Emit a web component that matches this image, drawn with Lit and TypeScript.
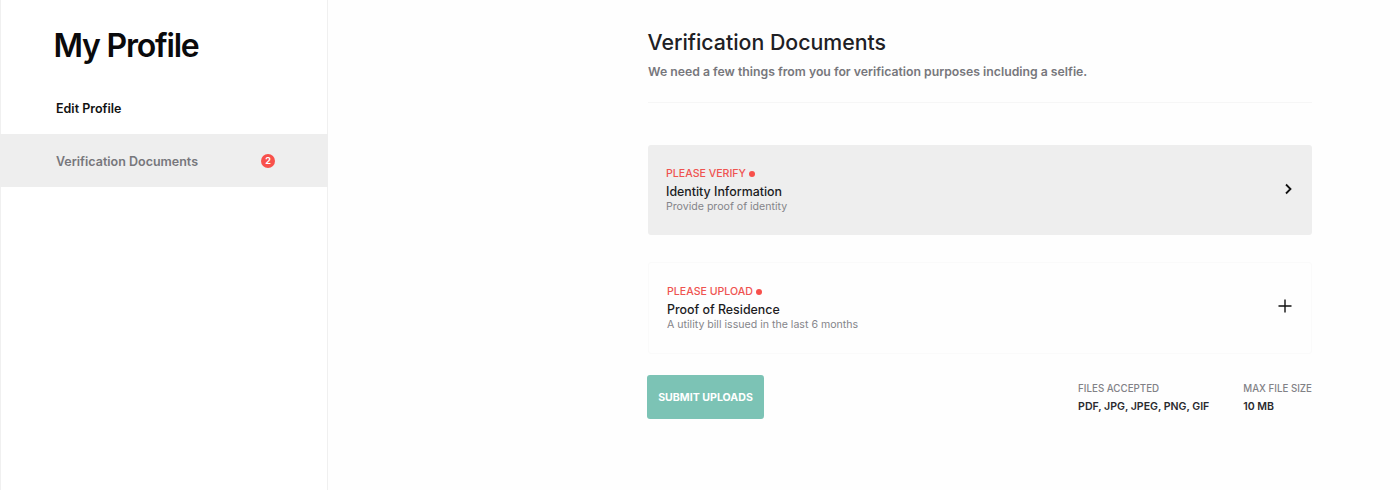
import { LitElement, html, css } from "lit";
import { customElement } from "lit/decorators.js";

@customElement("app-root")
export class AppRoot extends LitElement {
  static styles = css`
    :host { display: flex; width: 1400px; height: 490px; overflow: hidden; background: #fefefe; font-family: Inter, "Liberation Sans", sans-serif; color: #1c1c1e; }
    * { box-sizing: border-box; }
    .side { width: 328px; flex: none; border-left: 1px solid #f0f0f0; border-right: 1px solid #f0f0f0; padding-top: 26px; background: #fff; }
    h1 { margin: 0 0 0 52.5px; font-size: 32px; line-height: 40px; font-weight: 600; letter-spacing: -1.2px; color: #0a0a0c; }
    .nav { display: block; height: 53px; margin-top: 15px; padding: 0 0 0 55px; font-size: 12.5px; font-weight: 600; line-height: 55px; color: #111; }
    .nav.on { display: flex; align-items: center; margin-top: 0; margin-right: -1px; margin-left: -1px; padding-left: 56px; background: #eeeeee; color: #77777c; }
    .nav.on span { width: 205px; line-height: 16px; padding-top: 2px; }
    .badge { width: 14px; height: 14px; border-radius: 50%; background: #f8504b; color: #fff; font-size: 9px; font-weight: 700; line-height: 14px; text-align: center; }
    .main { width: 665px; margin-left: 319px; padding: 29px 0 0 1px; }
    h2 { margin: 0 0 0 -0.5px; font-size: 21.3px; line-height: 26px; font-weight: 500; color: #202024; }
    .sub { margin: 8px 0 0; font-size: 12.25px; line-height: 18px; font-weight: 600; color: #77777c; padding-bottom: 21px; border-bottom: 1px solid #f6f6f6; }
    .card { display: flex; align-items: center; justify-content: space-between; height: 90px; border-radius: 3px; padding: 0 18px; }
    .card.grey { margin-top: 42px; background: #eeeeee; }
    .card.plain { margin-top: 27px; height: 92px; background: #fefefe; border: 1px solid #fafafa; }
    .tag { display: flex; align-items: center; gap: 3px; font-size: 10.6px; line-height: 14px; font-weight: 500; color: #ef5350; }
    .tag i { width: 6px; height: 6px; border-radius: 50%; background: #f8504b; }
    .name { margin-top: 2px; font-size: 12.4px; line-height: 18px; font-weight: 500; color: #1c1c1e; }
    .desc { margin-top: -1px; font-size: 10.6px; line-height: 14px; color: #85858a; }
    svg { display: block; }
    .chev { margin: -3px 1px 0 0; }
    .plus { margin: -4px 1px 0 0; }
    .foot { display: flex; justify-content: space-between; margin-top: 21px; margin-left: -1px; }
    .btn { width: 117px; height: 44px; border-radius: 3px; background: #7cc3b5; color: #fff; font-size: 10.6px; font-weight: 700; line-height: 46px; text-align: center; }
    .meta { display: flex; gap: 34px; padding-top: 7px; }
    .meta div div:first-child { font-size: 9.75px; line-height: 13px; font-weight: 500; color: #818186; }
    .meta div div:last-child { margin-top: 5px; font-size: 10.55px; line-height: 14px; font-weight: 600; color: #2a2a2e; }
  `;

  render() {
    return html`
      <aside class="side">
        <h1>My Profile</h1>
        <div class="nav">Edit Profile</div>
        <div class="nav on"><span>Verification Documents</span><div class="badge">2</div></div>
      </aside>
      <main class="main">
        <h2>Verification Documents</h2>
        <p class="sub">We need a few things from you for verification purposes including a selfie.</p>
        <div class="card grey">
          <div>
            <div class="tag">PLEASE VERIFY <i></i></div>
            <div class="name">Identity Information</div>
            <div class="desc">Provide proof of identity</div>
          </div>
          <svg class="chev" width="10" height="12" viewBox="0 0 10 12" fill="none" stroke="#111" stroke-width="1.8"><path d="M3 1.5 7.5 6 3 10.5"/></svg>
        </div>
        <div class="card plain">
          <div>
            <div class="tag">PLEASE UPLOAD <i></i></div>
            <div class="name">Proof of Residence</div>
            <div class="desc">A utility bill issued in the last 6 months</div>
          </div>
          <svg class="plus" width="14" height="14" viewBox="0 0 14 14" fill="none" stroke="#111" stroke-width="1.4"><path d="M7 .5v13M.5 7h13"/></svg>
        </div>
        <div class="foot">
          <div class="btn">SUBMIT UPLOADS</div>
          <div class="meta">
            <div><div>FILES ACCEPTED</div><div>PDF, JPG, JPEG, PNG, GIF</div></div>
            <div><div>MAX FILE SIZE</div><div>10 MB</div></div>
          </div>
        </div>
      </main>
    `;
  }
}
